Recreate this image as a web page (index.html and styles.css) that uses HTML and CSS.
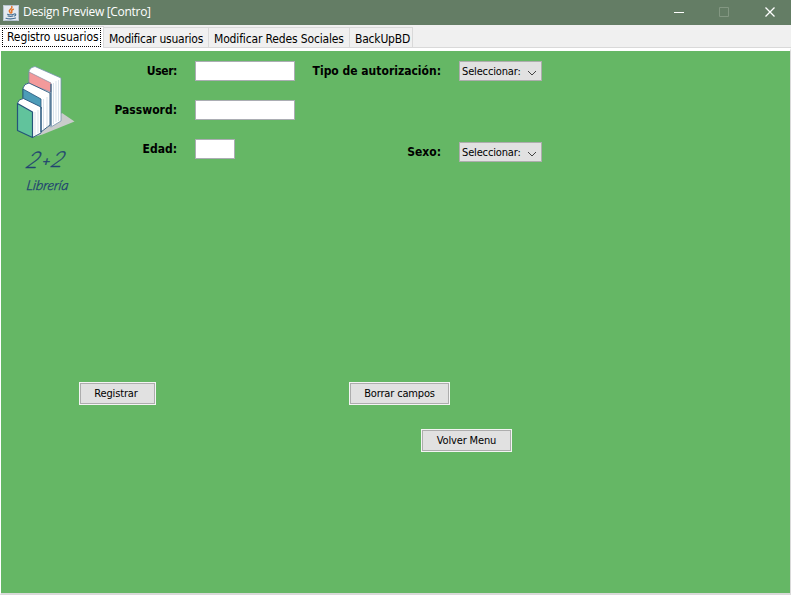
FILE: index.html
```html
<!DOCTYPE html>
<html lang="es">
<head>
<meta charset="utf-8">
<title>Design Preview [Contro]</title>
<link rel="stylesheet" href="styles.css">
</head>
<body>
<div class="window">
  <header class="titlebar">
    <svg class="java" width="16" height="16" viewBox="0 0 16 16">
      <rect width="16" height="16" rx="1" fill="#e4eaf0"/>
      <rect x=".5" y=".5" width="15" height="15" rx="1" fill="none" stroke="#b4c2ce"/>
      <g fill="none" stroke-linecap="round">
        <path d="M8.800 1.500C10 3.500 6 4.300 6.300 6c.1.800 1 1.200 1 2M10.300 4.300C8.500 5 8.300 5.700 8.800 6.500c.3.600 0 1-.3 1.400" stroke="#e2762b" stroke-width="1.500"/>
        <path d="M4.500 9.200c1.500.6 4.500.6 6.200 0M5 11c1.500.5 3.700.5 5 0M11.300 9c1.900-.5 2 1.300.2 2M3 13.200c2 .9 7.500.9 9.600-.1" stroke="#456f93" stroke-width="1.100"/>
      </g>
    </svg>
    <span class="title">Design Preview [Contro]</span>
    <svg class="controls" width="112" height="25" viewBox="0 0 112 25">
      <path d="M5 12.500h10" stroke="#fff"/>
      <path d="M50.500 7.500h9v9h-9z" fill="none" stroke="#839782"/>
      <path d="M96.500 7.500l9 9m0-9l-9 9" stroke="#fff" stroke-width="1.300" fill="none"/>
    </svg>
  </header>
  <nav class="tabs">
    <div class="tab selected"><span class="t1">Registro usuarios</span></div>
    <div class="tab w2"><span class="t2">Modificar usuarios</span></div>
    <div class="tab w3"><span class="t3">Modificar Redes Sociales</span></div>
    <div class="tab w4"><span class="t4">BackUpBD</span></div>
  </nav>
  <main class="panel">
    <section class="form">
      <svg class="logo" width="70" height="140" viewBox="10 60 70 140">
        <path d="M33 137L62 113l12.500 8.500-32 13z" fill="#c9cccb"/>
        <g stroke="#24547a" stroke-linejoin="round">
          <path d="M29 71q1-4 6-4.500L61 78v43l-10 6-22-14z" fill="#fff" stroke="#7593ae" stroke-width=".8"/>
          <path d="M29 72l22 11v9L29 84z" fill="#f39a9b" stroke="#87899f" stroke-width=".7"/>
          <path d="M23 88q1-4.500 6-5L50 93v32l-9 7-18-8z" fill="#fff" stroke-width=".9"/>
          <path d="M23 89l18 10v10l-18-9z" fill="#4d9cb8" stroke-width=".8"/>
          <path d="M17.500 103q1-4 6-4.500L41 107v26l-8.500 4.500z" fill="#fff" stroke-width=".9"/>
          <path d="M17.500 103.500L32.500 112v25.500l-15-7z" fill="#61c39c" stroke-width="1.200"/>
        </g>
        <path d="M41 107v25M51 84v42" stroke="#24547a" stroke-width="1.100"/>
        <path d="M35 112v23M38 110v23M43.500 99v30M47 97v30M53.500 83v41M56 81v41M58.500 80v41" stroke="#c7d5e1" stroke-width=".7"/>
        <g class="brand">
          <text transform="translate(24.500 168) skewX(-20)" font-size="23">2</text>
          <text transform="translate(42 165.500) skewX(-8)" font-size="13" font-weight="400">+</text>
          <text transform="translate(49.500 167) skewX(-20)" font-size="22">2</text>
          <text transform="translate(26 190) skewX(-8)" font-size="13.500" textLength="42" lengthAdjust="spacingAndGlyphs">Librería</text>
        </g>
      </svg>
      <div class="fields left">
        <label class="user">User:</label><input class="field">
        <label class="pass">Password:</label><input class="field">
        <label class="edad">Edad:</label><input class="field short">
      </div>
      <div class="fields right">
        <label class="tipo">Tipo de autorización:</label>
        <div class="combo"><span>Seleccionar:</span><svg width="10" height="6" viewBox="0 0 10 6"><path d="M1 1l4 4 4-4" fill="none" stroke="#444"/></svg></div>
        <label class="sexo">Sexo:</label>
        <div class="combo"><span>Seleccionar:</span><svg width="10" height="6" viewBox="0 0 10 6"><path d="M1 1l4 4 4-4" fill="none" stroke="#444"/></svg></div>
      </div>
    </section>
    <section class="actions">
      <button class="registrar">Registrar</button>
      <button class="borrar">Borrar campos</button>
    </section>
    <section class="back"><button class="volver">Volver Menu</button></section>
  </main>
</div>
</body>
</html>
```
FILE: styles.css
```css
* { box-sizing: border-box; }
body { margin: 0; background: #fff; font-family: "DejaVu Sans Condensed", "DejaVu Sans", sans-serif; font-stretch: condensed; color: #000; }
.window { width: 791px; height: 595px; display: flex; flex-direction: column; background: #f0f0f0; overflow: hidden; }
.titlebar { height: 25px; flex: none; background: #647d65; display: flex; align-items: center; padding-left: 3px; color: #fff; }
.title { margin: -1px 0 0 4px; font: 12px/16px "Open Sans", "Noto Sans", sans-serif; letter-spacing: -.3px; white-space: nowrap; }
.controls { margin-left: auto; margin-right: 10px; }
.tabs { height: 23px; flex: none; display: flex; align-items: flex-end; border-bottom: 1px solid #d9d9d9; font-size: 12px; line-height: 14px; white-space: nowrap; }
.tab { height: 20px; border: 1px solid #d9d9d9; border-left: 0; border-bottom: 0; padding: 4px 0 0 5px; }
.selected { width: 104px; height: 22px; margin-bottom: -1px; background: #fff; padding: 1px 2px 1px 2px; border-top-color: #d9d9d9; }
.selected span { display: block; width: 99px; height: 19px; border: 1px dotted #000; padding: 1px 0 0 4px; }
.t1 { letter-spacing: -.1px; }
.t2 { letter-spacing: -.25px; }
.t3 { letter-spacing: -.15px; }
.t4 { letter-spacing: -.2px; }
.w2 { width: 105px; }
.w3 { width: 141px; }
.w4 { width: 63px; }
.panel { flex: 1; background: #65b765; border: solid; border-width: 3px 1px 2px; border-color: #fff #d9d9d9 #d9d9d9 #fff; }
.form { display: flex; align-items: flex-start; padding: 9px 0 0 9px; height: 331px; }
.logo { flex: none; }
.brand { font-family: Lato, sans-serif; font-weight: 300; font-style: italic; fill: #214470; stroke: #214470; stroke-width: .35px; }
.fields { display: grid; justify-items: start; align-items: center; font-size: 12px; font-weight: bold; white-space: nowrap; margin-top: 1px; }
.fields label { justify-self: end; line-height: 20px; }
.user { letter-spacing: -.4px; }
.left { grid-template-columns: 97px 100px; column-gap: 18px; grid-auto-rows: 20px; row-gap: 19px; }
.right { grid-template-columns: 146px 83px; column-gap: 18px; grid-auto-rows: 20px; row-gap: 61px; }
.field { width: 100px; height: 20px; border: 1px solid #abadb3; background: #fff; padding: 0; margin: 0; border-radius: 0; outline: 0; }
.short { width: 40px; }
.combo { width: 83px; height: 20px; border: 1px solid #adadad; background: #e1e1e1; display: flex; align-items: center; justify-content: space-between; padding: 0 4px 0 2px; font-size: 11px; font-weight: normal; letter-spacing: -.15px; }
.combo svg { margin-top: 3px; }
button { height: 23px; padding: 0; border: 1px solid #f4f4f4; background: #e1e1e1; box-shadow: inset 0 0 0 1px #adadad; font: condensed 11px/19px "DejaVu Sans Condensed", "DejaVu Sans", sans-serif; letter-spacing: -.15px; color: #000; white-space: nowrap; }
.actions { display: flex; gap: 193px; padding-left: 78px; }
.registrar { width: 77px; padding-right: 3px; }
.borrar { width: 101px; }
.back { padding: 24px 0 0 420px; display: flex; }
.volver { width: 91px; }
```
